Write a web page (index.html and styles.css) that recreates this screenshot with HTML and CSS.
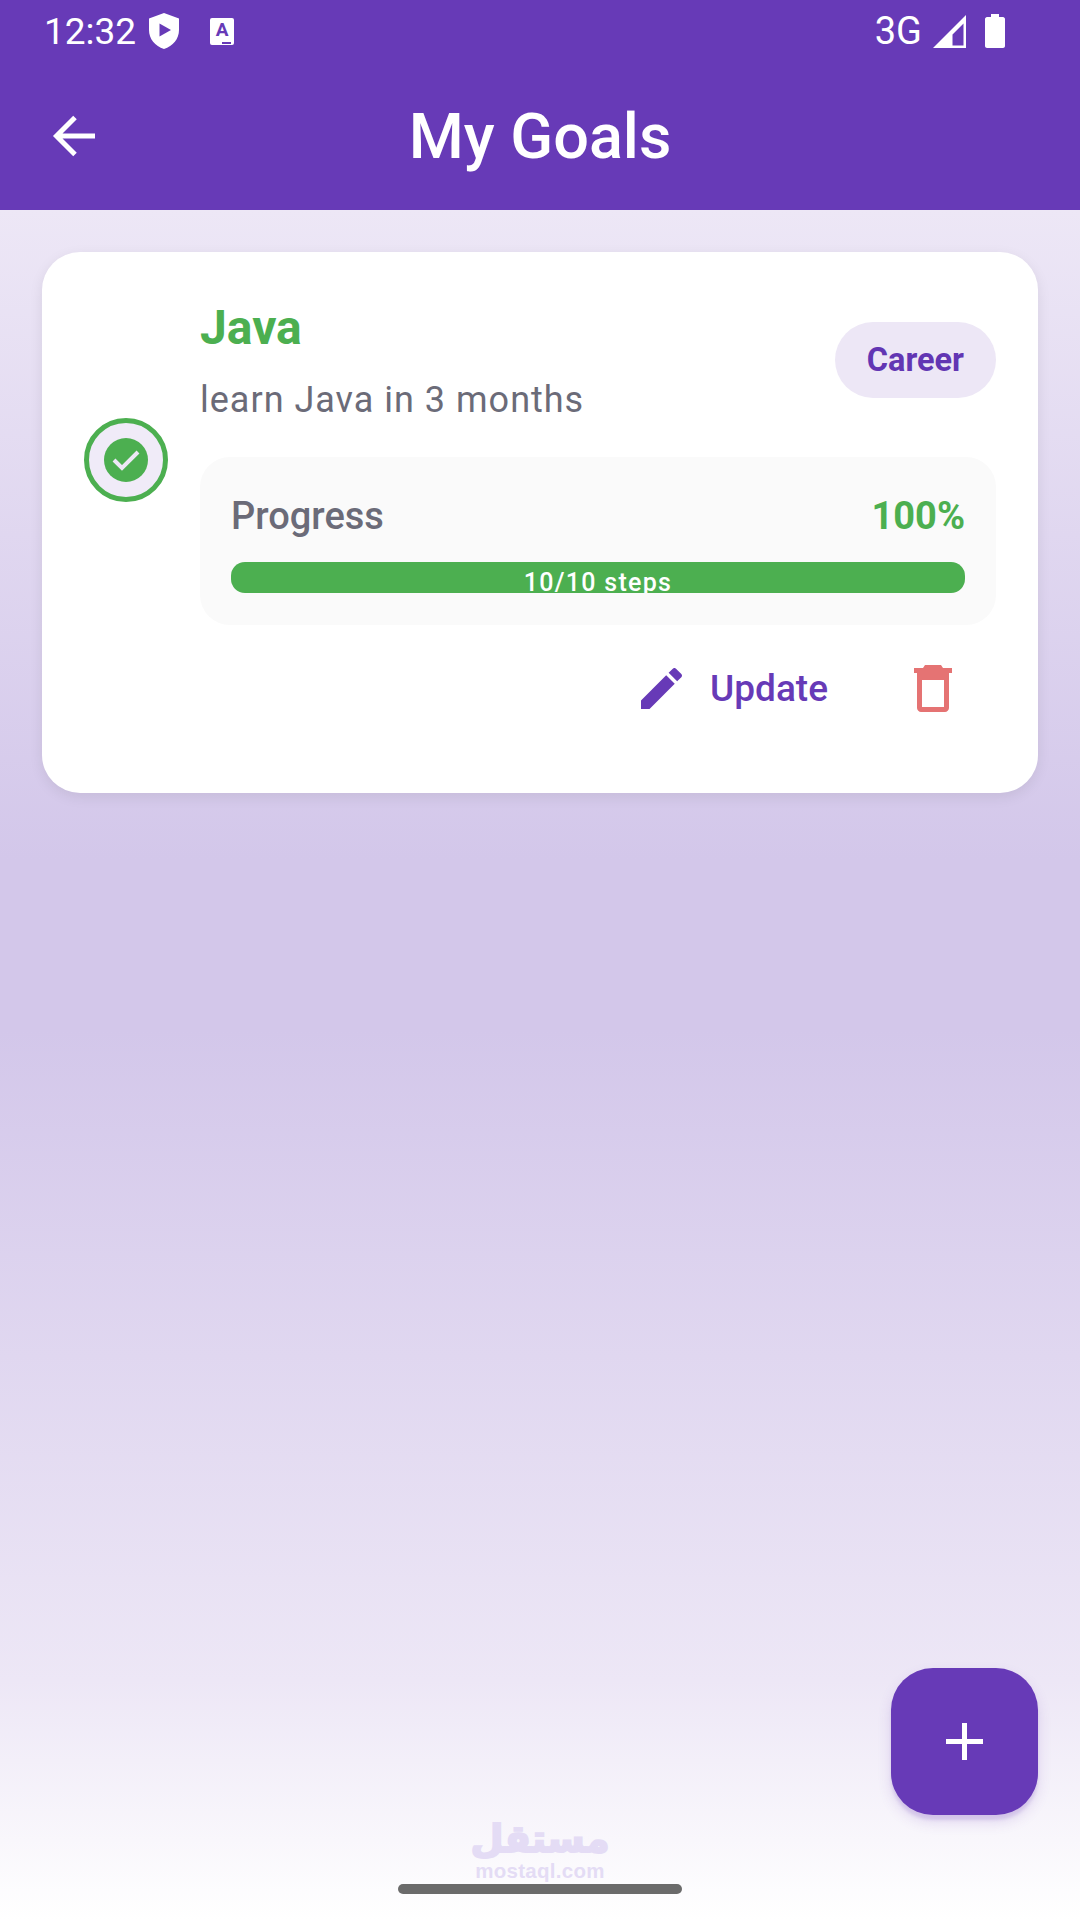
FILE: index.html

```html
<!DOCTYPE html>
<html lang="en">
<head>
  <meta charset="utf-8" />
  <title>My Goals</title>
  <link rel="stylesheet" href="styles.css">
</head>
<body>
  <div class="screen">
    <header class="appbar">
      <div class="status">
        <div class="status-left">
          <span class="time">12:32</span>
          <svg class="shield" viewBox="0 0 30 36"><path fill="#fff" fill-rule="evenodd" d="M15 0 30 5.500V17C30 26 24 33 15 36 6 33 0 26 0 17V5.500ZM10.500 10.500V23.500L22 17Z"/></svg>
          <span class="a-icon">A<i class="a-dots"></i></span>
        </div>
        <div class="status-right">
          <span class="net">3G</span>
          <svg class="signal" viewBox="0 0 33 33"><path fill="#fff" fill-rule="evenodd" d="M33 0V33H0ZM30.500 8.500 19.500 19.500V30.500H30.500Z"/></svg>
          <svg class="battery" viewBox="0 0 20 34"><path fill="#fff" d="M6 0H14V3H18C19 3 20 4 20 5V32C20 33 19 34 18 34H2C1 34 0 33 0 32V5C0 4 1 3 2 3H6Z"/></svg>
        </div>
      </div>
      <div class="toolbar">
        <svg class="back" viewBox="0 0 44 44"><path fill="none" stroke="#fff" stroke-width="5" d="M43 22H5M23 3.500 4.500 22 23 40.500"/></svg>
        <h1>My Goals</h1>
      </div>
    </header>

    <main class="content">
      <section class="card">
        <div class="card-main">
          <div class="check-col">
            <div class="check-ring">
              <div class="check-dot">
                <svg viewBox="0 0 30 24"><path fill="none" stroke="#ede7f6" stroke-width="4" d="M3 12 11 20 27 4"/></svg>
              </div>
            </div>
          </div>
          <div class="card-body">
            <div class="card-head">
              <div>
                <div class="goal-title">Java</div>
                <div class="goal-desc">learn Java in 3 months</div>
              </div>
              <span class="chip">Career</span>
            </div>
            <div class="progress-box">
              <div class="progress-row">
                <span class="progress-label">Progress</span>
                <span class="progress-pct">100%</span>
              </div>
              <div class="bar"><span>10/10 steps</span></div>
            </div>
          </div>
        </div>
        <div class="actions">
          <button class="update">
            <svg viewBox="3 3 18 18"><path fill="#673ab7" d="M3 17.250V21h3.750L17.810 9.940l-3.750-3.750L3 17.250zM20.710 7.040c.39-.39.39-1.020 0-1.410l-2.340-2.340c-.39-.39-1.020-.39-1.410 0l-1.830 1.830 3.750 3.750 1.830-1.830z"/></svg>
            Update
          </button>
          <svg class="trash" viewBox="0 0 38 47"><path fill="#e57373" fill-rule="evenodd" d="M11 0H27L29 3H38V8H35V43C35 45 33 47 31 47H7C5 47 3 45 3 43V8H0V3H9ZM8 15V42H30V15Z"/></svg>
        </div>
      </section>
    </main>

    <button class="fab"><svg viewBox="0 0 37 37"><path fill="#fff" d="M16 0H21V16H37V21H21V37H16V21H0V16H16Z"/></svg></button>

    <div class="watermark">
      <div class="wm-ar" lang="ar" dir="rtl">مستقل</div>
      <div class="wm-en">mostaql.com</div>
    </div>
    <div class="home-bar"></div>
  </div>
</body>
</html>
```

FILE: styles.css

```css
* {
  box-sizing: border-box;
}
body {
  margin: 0;
  font-family: Roboto, sans-serif;
}
.screen {
  width: 1080px;
  height: 1920px;
  position: relative;
  overflow: hidden;
  display: flex;
  flex-direction: column;
  background: #fff;
}

/* top bar */
.appbar {
  height: 210px;
  background: #673ab7;
  color: #fff;
  flex-shrink: 0;
}
.status {
  height: 62px;
  padding: 0 75px 0 44px;
  display: flex;
  justify-content: space-between;
  align-items: center;
}
.status-left,
.status-right {
  display: flex;
  align-items: center;
}
.time {
  font-size: 37px;
}
.shield {
  width: 30px;
  height: 36px;
  margin-left: 13px;
}
.a-icon {
  width: 24px;
  height: 27px;
  margin-left: 31px;
  background: #fff;
  border-radius: 2px;
  color: #673ab7;
  font-size: 19px;
  font-weight: 700;
  line-height: 23px;
  text-align: center;
  position: relative;
}
.a-dots {
  position: absolute;
  right: 3px;
  bottom: 1px;
  width: 9px;
  height: 2px;
  background: #673ab7;
}
.net {
  font-size: 38px;
  margin-right: 11px;
}
.signal {
  width: 33px;
  height: 33px;
  margin-right: 19px;
}
.battery {
  width: 20px;
  height: 34px;
}
.toolbar {
  height: 148px;
  display: flex;
  align-items: center;
  justify-content: center;
  position: relative;
}
.back {
  position: absolute;
  left: 52px;
  top: 52px;
  width: 44px;
  height: 44px;
}
h1 {
  margin: 0;
  font-size: 63px;
  font-weight: 500;
}

/* goals list */
.content {
  flex: 1;
  padding: 42px;
  background: linear-gradient(#ede7f6 0%, #d3c7ea 38%, #d3c7ea 48%, #ede7f6 86%, #ffffff 100%);
}
.card {
  height: 541px;
  background: #fff;
  border-radius: 38px;
  box-shadow: 0 4px 14px rgba(0, 0, 0, 0.08);
  padding: 42px;
}
.card-main {
  display: flex;
  align-items: center;
}
.check-col {
  width: 116px;
  flex-shrink: 0;
}
.check-ring {
  width: 84px;
  height: 84px;
  border: 5px solid #4caf50;
  border-radius: 50%;
  background: #f0ebf8;
  display: flex;
  align-items: center;
  justify-content: center;
}
.check-dot {
  width: 44px;
  height: 44px;
  border-radius: 50%;
  background: #4caf50;
  display: flex;
  align-items: center;
  justify-content: center;
}
.check-dot svg {
  width: 30px;
  height: 24px;
}
.card-body {
  flex: 1;
}
.card-head {
  display: flex;
  justify-content: space-between;
  align-items: center;
  padding-top: 1px;
}
.goal-title {
  font-size: 48px;
  font-weight: 700;
  color: #4caf50;
  line-height: 66px;
}
.goal-desc {
  font-size: 36px;
  color: #6b6b78;
  letter-spacing: 1px;
  line-height: 50px;
  margin-top: 14px;
}
.chip {
  height: 76px;
  padding: 0 32px;
  border-radius: 38px;
  background: #ede7f6;
  color: #6236b3;
  font-size: 32.500px;
  font-weight: 700;
  line-height: 76px;
}
.progress-box {
  margin-top: 32px;
  height: 168px;
  background: #fafafa;
  border-radius: 30px;
  padding: 37px 31px 0;
}
.progress-row {
  display: flex;
  justify-content: space-between;
  font-size: 38px;
  font-weight: 500;
  line-height: 44px;
}
.progress-label {
  color: #6b6b78;
}
.progress-pct {
  color: #4caf50;
  font-weight: 700;
}
.bar {
  margin-top: 24px;
  height: 31px;
  background: #4caf50;
  border-radius: 14px;
  overflow: hidden;
  text-align: center;
  color: #fff;
  font-size: 25px;
  font-weight: 500;
  letter-spacing: 1.300px;
  line-height: 42px;
}
.actions {
  margin-top: 40px;
  display: flex;
  justify-content: flex-end;
  align-items: center;
  padding-right: 44px;
}
.update {
  border: 0;
  padding: 0;
  background: none;
  color: #673ab7;
  font-family: inherit;
  font-size: 37px;
  font-weight: 500;
  display: flex;
  align-items: center;
  gap: 28px;
}
.update svg {
  width: 41px;
  height: 41px;
}
.trash {
  width: 38px;
  height: 47px;
  margin-left: 86px;
}

/* floating stuff */
.fab {
  position: absolute;
  left: 891px;
  top: 1668px;
  width: 147px;
  height: 147px;
  border: 0;
  border-radius: 42px;
  background: #673ab7;
  display: flex;
  align-items: center;
  justify-content: center;
  box-shadow: 0 5px 3px rgba(103, 58, 183, 0.14), 0 7px 14px rgba(103, 58, 183, 0.16);
}
.fab svg {
  width: 37px;
  height: 37px;
}
.watermark {
  position: absolute;
  left: 440px;
  top: 1815px;
  width: 200px;
  text-align: center;
  color: #e4dcf5;
  font-family: "DejaVu Sans", sans-serif;
}
.wm-ar {
  font-size: 38px;
  font-weight: 700;
  line-height: 48px;
  -webkit-text-stroke: 2px #e4dcf5;
}
.wm-en {
  font-family: "Liberation Sans", sans-serif;
  font-size: 20.500px;
  font-weight: 700;
  letter-spacing: 0.300px;
  line-height: 22px;
  margin-top: -3px;
}
.home-bar {
  position: absolute;
  left: 398px;
  top: 1884px;
  width: 284px;
  height: 10px;
  border-radius: 5px;
  background: #6b6b6b;
}
```
